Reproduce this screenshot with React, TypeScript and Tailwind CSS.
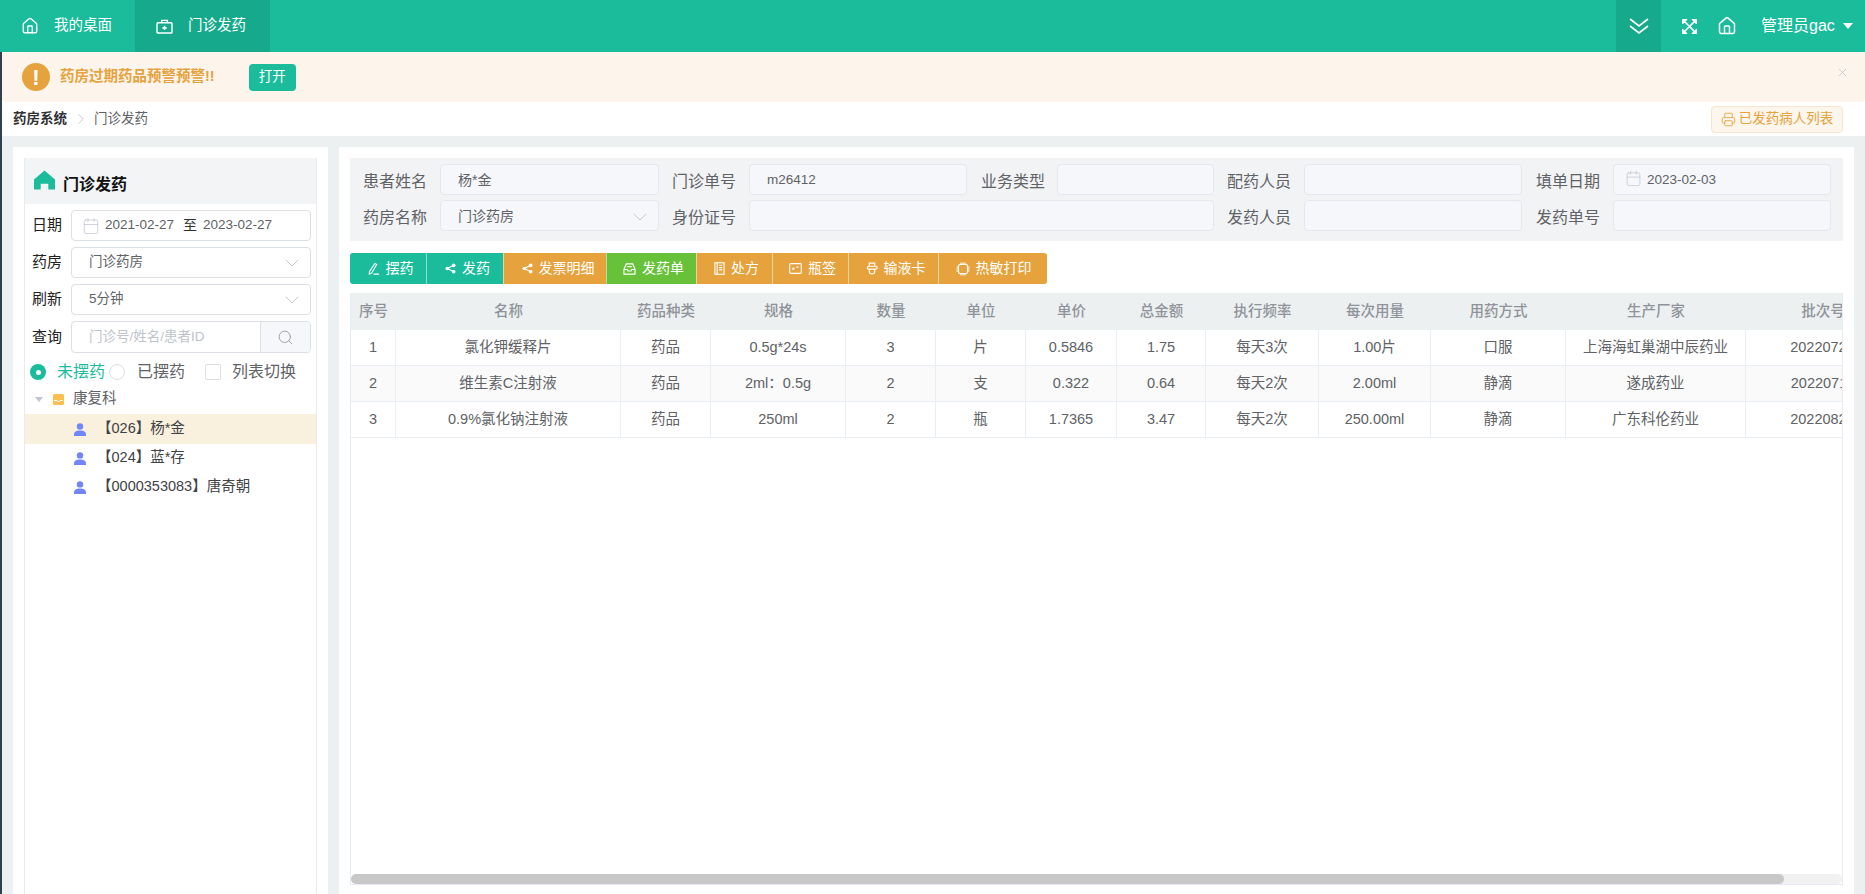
import React from "react";
import { Search, X, ChevronDown, ChevronRight, Printer, Calendar, House } from "lucide-react";

const FONT = "font-['Liberation_Sans','Noto_Sans_CJK_SC',sans-serif]";

function BriefMed({ className = "" }: { className?: string }) {
  return (
    <svg viewBox="0 0 18 16" fill="none" stroke="currentColor" strokeWidth="1.5" className={className}>
      <rect x="1" y="4" width="16" height="11" rx="1" />
      <path d="M6 4V1.5h6V4" />
      <path d="M9 7.2v4.6M6.7 9.5h4.6" strokeWidth="1.7" />
    </svg>
  );
}

function DoubleChevron() {
  return (
    <svg viewBox="0 0 20 18" fill="none" stroke="currentColor" strokeWidth="1.6" className="w-5 h-[18px]">
      <path d="M1 2l9 7 9-7" />
      <path d="M1 9l9 7 9-7" />
    </svg>
  );
}

function ExpandIcon() {
  return (
    <svg viewBox="0 0 15 15" fill="none" stroke="currentColor" className="w-[15px] h-[15px]">
      <path d="M2 2l11 11M13 2L2 13" strokeWidth="1.7" />
      <path d="M0.5 5V0.5H5L0.5 5ZM10 0.5h4.5V5L10 0.5ZM0.5 10V14.5H5L0.5 10ZM14.5 10V14.5H10L14.5 10Z" fill="currentColor" strokeWidth="1" />
    </svg>
  );
}

function Person() {
  return (
    <svg viewBox="0 0 12 13" className="w-3 h-[13px] shrink-0" fill="#7186fb">
      <circle cx="6" cy="3.4" r="3.2" />
      <path d="M0 13v-1.6C0 9 2.4 7.6 6 7.6s6 1.4 6 3.8V13z" />
    </svg>
  );
}

function Folder() {
  return (
    <svg viewBox="0 0 11 11" className="w-[11px] h-[11px] shrink-0 block">
      <rect x="0" y="0" width="11" height="11" rx="1.5" fill="#fbbf50" />
      <path d="M1 6.5h3l.7 1h1.6l.7-1h3" stroke="#fff" fill="none" strokeWidth="1" />
    </svg>
  );
}

const strokeProps = { fill: "none", stroke: "currentColor", strokeWidth: 1.2 };

const btnIcons: Record<string, React.ReactNode> = {
  pen: (
    <svg viewBox="0 0 14 14" className="w-[13px] h-[13px]" {...strokeProps}>
      <path d="M8.5 1.5l2 1.2L5 12l-2.5 1L2.6 10.4z" />
      <path d="M7 13h6" />
    </svg>
  ),
  share: (
    <svg viewBox="0 0 12 12" className="w-[11px] h-[11px]" fill="currentColor" stroke="currentColor">
      <path d="M9.5 2.5L2.5 6l7 3.5" fill="none" strokeWidth="1.1" />
      <circle cx="9.5" cy="2.5" r="2" stroke="none" />
      <circle cx="2.5" cy="6" r="2" stroke="none" />
      <circle cx="9.5" cy="9.5" r="2" stroke="none" />
    </svg>
  ),
  inbox: (
    <svg viewBox="0 0 14 13" className="w-[13px] h-[12px]" {...strokeProps}>
      <path d="M3.5 1h7L13 7v5H1V7z" />
      <path d="M1 7h3.5l.8 1.6h3.4L9.5 7H13" />
      <path d="M4.5 4h5" />
    </svg>
  ),
  book: (
    <svg viewBox="0 0 12 14" className="w-[11px] h-[13px]" {...strokeProps}>
      <rect x="1" y="0.7" width="10" height="12.6" />
      <path d="M3.5 0.7v12.6M5.5 3.5h3.5M5.5 6h3.5M5.5 8.5h3.5" />
    </svg>
  ),
  label: (
    <svg viewBox="0 0 14 12" className="w-[13px] h-[11px]" {...strokeProps}>
      <rect x="0.7" y="0.7" width="12.6" height="10.6" rx="1" />
      <rect x="3.5" y="5" width="2.4" height="2.4" fill="currentColor" stroke="none" />
      <path d="M7.5 4.5h3" />
    </svg>
  ),
  card: (
    <svg viewBox="0 0 13 14" className="w-[12px] h-[13px]" {...strokeProps}>
      <path d="M3.5 4.5V1.2h6v3.3M3 4.5h7.5a1.6 1.6 0 010 3.2H3a1.6 1.6 0 010-3.2zM3.5 7.7v2.2a3 3 0 006 0V7.7" />
    </svg>
  ),
  chip: (
    <svg viewBox="0 0 14 14" className="w-[14px] h-[14px]" {...strokeProps}>
      <rect x="2.5" y="2.5" width="9" height="9" rx="1.5" />
      <path d="M0.5 5h2M0.5 7h2M0.5 9h2M11.5 5h2M11.5 7h2M11.5 9h2M5 0.5v2M7 0.5v2M9 0.5v2M5 11.5v2M7 11.5v2M9 11.5v2" />
    </svg>
  ),
};

const buttons = [
  { t: "摆药", i: "pen", c: "bg-[#1abc9c]", w: "w-[76px]", p: "pl-[4px]" },
  { t: "发药", i: "share", c: "bg-[#1abc9c]", w: "w-[77px]", p: "pl-[5px]" },
  { t: "发票明细", i: "share", c: "bg-[#e6a23c]", w: "w-[103px]", p: "pl-[6px]" },
  { t: "发药单", i: "inbox", c: "bg-[#67c23a]", w: "w-[90px]", p: "pl-[4px]" },
  { t: "处方", i: "book", c: "bg-[#e6a23c]", w: "w-[76px]", p: "pl-[4px]" },
  { t: "瓶签", i: "label", c: "bg-[#e6a23c]", w: "w-[76px]", p: "pl-[4px]" },
  { t: "输液卡", i: "card", c: "bg-[#e6a23c]", w: "w-[90px]", p: "pl-[4px]" },
  { t: "热敏打印", i: "chip", c: "bg-[#e6a23c]", w: "w-[109px]", p: "pl-[1px]" },
];

const columns = [
  { t: "序号", w: "w-[45px]" },
  { t: "名称", w: "w-[225px]" },
  { t: "药品种类", w: "w-[90px]" },
  { t: "规格", w: "w-[135px]" },
  { t: "数量", w: "w-[90px]" },
  { t: "单位", w: "w-[90px]" },
  { t: "单价", w: "w-[91px]" },
  { t: "总金额", w: "w-[89px]" },
  { t: "执行频率", w: "w-[113px]" },
  { t: "每次用量", w: "w-[112px]" },
  { t: "用药方式", w: "w-[135px]" },
  { t: "生产厂家", w: "w-[180px]" },
  { t: "批次号", w: "w-[154px]" },
];

const rows = [
  ["1", "氯化钾缓释片", "药品", "0.5g*24s", "3", "片", "0.5846", "1.75", "每天3次", "1.00片", "口服", "上海海虹巢湖中辰药业", "20220721"],
  ["2", "维生素C注射液", "药品", "2ml：0.5g", "2", "支", "0.322", "0.64", "每天2次", "2.00ml", "静滴", "遂成药业", "20220711"],
  ["3", "0.9%氯化钠注射液", "药品", "250ml", "2", "瓶", "1.7365", "3.47", "每天2次", "250.00ml", "静滴", "广东科伦药业", "20220821"],
];

function FilterRow({ label, children }: { label: string; children: React.ReactNode }) {
  return (
    <div className="flex items-center h-[31px]">
      <span className="w-[46px] pl-[7px] text-[15px] text-[#222] shrink-0">{label}</span>
      <div className="w-[240px] h-full">{children}</div>
    </div>
  );
}

function SelectBox({ value }: { value: string }) {
  return (
    <div className="h-full border border-[#dcdfe6] rounded-[4px] flex items-center justify-between pl-[17px] pr-[6px] text-[13.5px] text-[#606266]">
      <span>{value}</span>
      <ChevronDown className="w-[24px] h-[24px] text-[#c0c4cc]" strokeWidth={0.9} />
    </div>
  );
}

function FormLabel({ children }: { children: React.ReactNode }) {
  return <div className="text-[16px] text-[#606266] leading-[31px] pt-[2px] whitespace-nowrap">{children}</div>;
}

function FormInput({ children, className = "" }: { children?: React.ReactNode; className?: string }) {
  return (
    <div className={`h-[31px] bg-[#f5f7fa] border border-[#e4e7ed] rounded-[4px] flex items-center px-[17px] pt-[2px] text-[14px] text-[#606266] ${className}`}>
      {children}
    </div>
  );
}

function Radio({ on }: { on?: boolean }) {
  return on ? (
    <span className="w-4 h-4 rounded-full bg-[#1abc9c] flex items-center justify-center shrink-0">
      <span className="w-[5px] h-[5px] rounded-full bg-white" />
    </span>
  ) : (
    <span className="w-4 h-4 rounded-full border border-[#dcdfe6] bg-white shrink-0" />
  );
}

export default function App() {
  return (
    <div className={`${FONT} w-[1865px] h-[894px] overflow-hidden flex flex-col bg-white`}>
      <header className="h-[52px] shrink-0 bg-[#1abc9c] text-white flex items-stretch">
        <div className="w-[135px] flex items-center pl-[21px] text-[14.5px]">
          <House className="w-[18px] h-[18px] mr-[15px]" strokeWidth={1.8} />
          <span>我的桌面</span>
        </div>
        <div className="w-[135px] flex items-center pl-[21px] text-[14.5px] bg-[#17a98c]">
          <BriefMed className="w-[17px] h-[15px] mr-[15px]" />
          <span>门诊发药</span>
        </div>
        <div className="flex-1" />
        <div className="w-[45px] bg-[#17a98c] flex items-center justify-center">
          <DoubleChevron />
        </div>
        <div className="w-[204px] flex items-center pl-[21px]">
          <ExpandIcon />
          <House className="w-[20px] h-[20px] ml-[20px]" strokeWidth={1.8} />
          <span className="ml-[24px] text-[16px] whitespace-nowrap">管理员gac</span>
          <span className="ml-[8px] w-0 h-0 border-x-[5px] border-x-transparent border-t-[6px] border-t-white" />
        </div>
      </header>

      <div className="flex-1 min-h-0 flex flex-col border-l-2 border-[#2f4050]">
        <div className="h-[50px] shrink-0 bg-[#fdf5ec] rounded-b-[4px] flex items-center pl-[20px] pr-[16px]">
          <span className="w-7 h-7 rounded-full bg-[#e6a23c] text-white font-bold text-[22px] flex items-center justify-center">!</span>
          <span className="ml-[10px] text-[14.5px] font-bold text-[#e6a23c] whitespace-nowrap">药房过期药品预警预警!!</span>
          <span className="ml-[34px] w-[47px] h-[27px] rounded-[4px] bg-[#1abc9c] text-white text-[13.5px] flex items-center justify-center">打开</span>
          <div className="flex-1" />
          <X className="w-[13px] h-[13px] text-[#c0c4cc] -mt-[10px]" strokeWidth={1.4} />
        </div>

        <div className="h-[34px] shrink-0 flex items-center pl-[11px] pr-[22px]">
          <span className="text-[13.5px] font-bold text-[#303133]">药房系统</span>
          <ChevronRight className="w-[18px] h-[18px] mx-[4.5px] text-[#c0c4cc]" strokeWidth={1.2} />
          <span className="text-[13.5px] text-[#606266]">门诊发药</span>
          <div className="flex-1" />
          <span className="w-[132px] h-[27px] rounded-[4px] bg-[#fdf6ec] border border-[#f5e6d0] text-[#e6a23c] text-[13.5px] flex items-center justify-center gap-[3px]">
            <Printer className="w-[15px] h-[15px]" strokeWidth={1.4} />
            已发药病人列表
          </span>
        </div>

        <main className="flex-1 min-h-0 bg-[#ecf0f1] flex gap-[11px] pl-[11px] pr-[11px] pt-[11px]">
          <aside className="w-[315px] shrink-0 bg-white pt-[11px] px-[11px]">
            <div className="h-full border-x border-[#e9e9ee] bg-white">
              <div className="h-[46px] bg-[#f3f4f5] flex items-center pl-[9px]">
                <svg viewBox="0 0 22 20" className="w-[21px] h-[20px] -mt-[2px]" fill="#1abc9c">
                  <path d="M11 0L22 9.5V20h-7v-6H7v6H0V9.5z" />
                </svg>
                <span className="ml-[8px] mt-[7px] text-[16px] font-bold text-[#111]">门诊发药</span>
              </div>
              <div className="flex flex-col gap-[6px] pt-[6px]">
                <FilterRow label="日期">
                  <div className="h-full border border-[#dcdfe6] rounded-[4px] flex items-center pl-[10px] text-[13.5px] text-[#606266]">
                    <Calendar className="w-[18px] h-[18px] text-[#c0c4cc] mr-[5px]" strokeWidth={1} />
                    <span>2021-02-27</span>
                    <span className="ml-[9px] mr-[6px] text-[14px] text-[#303133]">至</span>
                    <span>2023-02-27</span>
                  </div>
                </FilterRow>
                <FilterRow label="药房"><SelectBox value="门诊药房" /></FilterRow>
                <FilterRow label="刷新"><SelectBox value="5分钟" /></FilterRow>
                <div className="flex items-center h-[32px]">
                  <span className="w-[46px] pl-[7px] text-[15px] text-[#222] shrink-0">查询</span>
                  <div className="w-[240px] h-full border border-[#dcdfe6] rounded-[4px] flex overflow-hidden">
                    <span className="flex-1 flex items-center pl-[17px] text-[13.5px] text-[#c0c4cc]">门诊号/姓名/患者ID</span>
                    <span className="w-[50px] bg-[#f5f7fa] border-l border-[#dcdfe6] flex items-center justify-center">
                      <Search className="w-[17px] h-[17px] text-[#909399]" strokeWidth={1.2} />
                    </span>
                  </div>
                </div>
              </div>

              <div className="flex items-center h-[20px] mt-[9px] pl-[5px] text-[16px] text-[#606266] whitespace-nowrap">
                <Radio on />
                <span className="ml-[11px] w-[49px] text-[#1abc9c]">未摆药</span>
                <span className="ml-[3px] flex"><Radio /></span>
                <span className="ml-[12px] w-[48px]">已摆药</span>
                <span className="ml-[20px] w-4 h-4 rounded-[2px] border border-[#dcdfe6] shrink-0" />
                <span className="ml-[11px]">列表切换</span>
              </div>

              <div className="h-[30px] mt-[2px] flex items-center pl-[10px] text-[14.5px] text-[#606266]">
                <span className="w-0 h-0 border-x-[4.5px] border-x-transparent border-t-[5px] border-t-[#c0c4cc]" />
                <span className="ml-[10px]"><Folder /></span>
                <span className="ml-[9px]">康复科</span>
              </div>
              {[
                { t: "【026】杨*金", on: true },
                { t: "【024】蓝*存", on: false },
                { t: "【0000353083】唐奇朝", on: false },
              ].map(({ t, on }, i) => (
                <div key={t} className={`h-[30px] flex items-center pl-[49px] text-[14.5px] text-[#3f4246] ${on ? "bg-[#f9f0dd]" : ""} ${i ? "-mt-[1px]" : ""}`}>
                  <Person />
                  <span className="ml-[11px] whitespace-nowrap">{t}</span>
                </div>
              ))}
            </div>
          </aside>

          <section className="flex-1 min-w-0 bg-white pt-[11px] pl-[11px] pr-[11px] flex flex-col">
            <div className="h-[83px] shrink-0 bg-[#f2f3f5] pl-[13px] pt-[6px] grid grid-cols-[77px_219px_90px_218px_90px_157px_90px_218px_91px_218px] grid-rows-[31px_31px] gap-y-[5px]">
              <FormLabel>患者姓名</FormLabel>
              <FormInput>杨*金</FormInput>
              <div className="pl-[13px]"><FormLabel>门诊单号</FormLabel></div>
              <FormInput><span className="text-[13.5px]">m26412</span></FormInput>
              <div className="pl-[14px]"><FormLabel>业务类型</FormLabel></div>
              <FormInput />
              <div className="pl-[13px]"><FormLabel>配药人员</FormLabel></div>
              <FormInput />
              <div className="pl-[14px]"><FormLabel>填单日期</FormLabel></div>
              <FormInput className="!px-[11px]">
                <Calendar className="w-[17px] h-[17px] text-[#c0c4cc] mr-[5px] -mt-[5px]" strokeWidth={1} />
                <span className="text-[13.5px]">2023-02-03</span>
              </FormInput>

              <FormLabel>药房名称</FormLabel>
              <FormInput className="justify-between !pr-[6px]">
                <span>门诊药房</span>
                <ChevronDown className="w-[24px] h-[24px] text-[#c0c4cc]" strokeWidth={0.9} />
              </FormInput>
              <div className="pl-[13px]"><FormLabel>身份证号</FormLabel></div>
              <FormInput className="col-span-3" />
              <div className="pl-[13px]"><FormLabel>发药人员</FormLabel></div>
              <FormInput />
              <div className="pl-[14px]"><FormLabel>发药单号</FormLabel></div>
              <FormInput />
            </div>

            <div className="flex mt-[12px] h-[31px] shrink-0 rounded-[3px] overflow-hidden w-max">
              {buttons.map((b, i) => (
                <div key={i} className={`${b.w} ${b.c} ${b.p} ${i ? "border-l border-white/50" : ""} flex items-center justify-center gap-[6px] text-white text-[14px] whitespace-nowrap`}>
                  {btnIcons[b.i]}
                  <span>{b.t}</span>
                </div>
              ))}
            </div>

            <div className="mt-[9px] flex-1 min-h-0 mb-[9px] border border-[#e8ebf2] border-t-0 flex flex-col">
              <div className="flex-1 min-h-0 overflow-hidden">
                <div className="w-max">
                  <div className="flex h-[37px] bg-[#ecf0f1]">
                    {columns.map((c) => (
                      <div key={c.t} className={`${c.w} shrink-0 flex items-center justify-center text-[14.5px] font-medium text-[#909399]`}>{c.t}</div>
                    ))}
                  </div>
                  {rows.map((r, i) => (
                    <div key={i} className={`flex h-[36px] border-b border-[#e9edf4] ${i === 1 ? "bg-[#fafafa]" : "bg-white"}`}>
                      {r.map((v, j) => (
                        <div key={j} className={`${columns[j].w} shrink-0 flex items-center justify-center text-[14.5px] text-[#606266] border-r border-[#e9edf4] whitespace-nowrap`}>{v}</div>
                      ))}
                    </div>
                  ))}
                </div>
              </div>
              <div className="h-[10px] shrink-0 bg-[#f1f1f1] rounded-[5px]">
                <div className="h-full w-[1433px] bg-[#c8c8c8] rounded-[5px]" />
              </div>
            </div>
          </section>
        </main>
      </div>
    </div>
  );
}
